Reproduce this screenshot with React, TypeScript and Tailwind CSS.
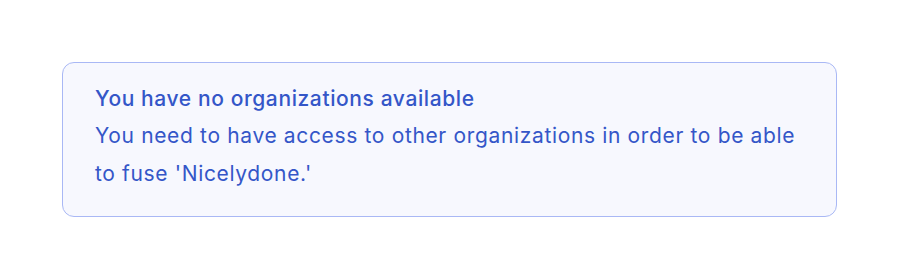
import React from 'react';

export default function App() {
  return (
    <div className="w-[900px] h-[280px] bg-white pt-[62px] pl-[62px]" style={{ fontFamily: 'Inter, "Noto Sans", sans-serif' }}>
      <div className="w-[775px] h-[155px] rounded-xl border border-[#a9b8f5] bg-[#f7f8fe] px-8 pt-[18px] text-[#3456c8]">
        <h2 className="text-[21px] font-medium leading-[36px] tracking-[0.6px]">You have no organizations available</h2>
        <p className="text-[21px] leading-[38px] tracking-[0.65px]">
          You need to have access to other organizations in order to be able
          <br />
          to fuse 'Nicelydone.'
        </p>
      </div>
    </div>
  );
}
